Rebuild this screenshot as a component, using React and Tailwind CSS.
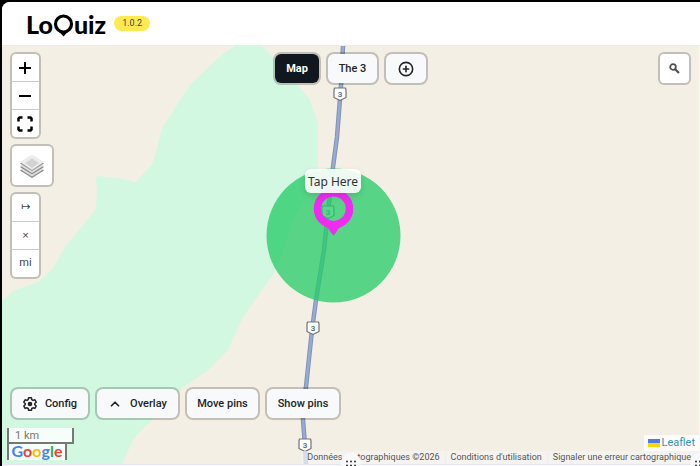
import React from "react";
import { ChevronUp, CirclePlus } from "lucide-react";

const barButton =
  "flex h-[33px] items-center justify-center rounded-lg border-2 border-black/20 bg-clip-padding pt-px text-[11px]";
const lightButton = barButton + " bg-[#f8f9fb] font-medium text-[#212529]";
const group =
  "flex w-[31px] flex-col divide-y divide-[#ccc] overflow-hidden rounded-md border-2 border-black/20 bg-white bg-clip-padding";
const groupButton =
  "flex h-7 items-center justify-center last:h-[27px] text-[#444]";

const road =
  "M343 46 341 86 337 137 333 167 328 212 324 250 316 300 312 330 306 387 303 403 303 420 305 445 306 465";

const shields = [
  [340, 94],
  [328, 212],
  [313, 328],
  [305, 445],
];

const Logo = () => (
  <a href="#" aria-label="LoQuiz" className="flex items-center font-['Lato',sans-serif] text-[25px] leading-7 font-black text-black">
    <span>Lo</span>
    <svg width="21" height="24" viewBox="0 0 21 24" className="mt-1" aria-hidden="true">
      <circle cx="10.500" cy="10" r="8" fill="none" stroke="currentColor" strokeWidth="3.200" />
      <path d="M6 17.500h9L10.500 22.500z" fill="currentColor" />
    </svg>
    <span>uiz</span>
  </a>
);

const MapDrawing = () => (
  <svg
    className="absolute inset-0 h-full w-full"
    viewBox="2 46 697 418"
    preserveAspectRatio="xMidYMid slice"
  >
    <path
      fill="#d2f8e1"
      d="M235 46 218 58 190 85 162 128 153 163 136 182 118 178 99 176Q95 177 96 181L97 190 96 209 65 247 53 268Q42 280 36 283L13 291 2 301V466H121L134 438 153 419 182 388 207 371 228 350 243 317 274 273 283 253 290 227 302 203 318 173V123L310 100 298 85 272 56 262 46Z"
    />
    <g fill="none" strokeLinejoin="round">
      <path stroke="#7f93ba" strokeWidth="4.500" d={road} />
      <path stroke="#98abcf" strokeWidth="2.500" d={road} />
    </g>
    {shields.map(([x, y]) => (
      <g key={y} transform={`translate(${x} ${y})`}>
        <path
          d="M-5.500-6H5.500L6-4V3.500L0 6.500-6 3.500V-4Z"
          fill="#fff"
          stroke="#707478"
          strokeWidth="1.200"
          strokeLinejoin="round"
        />
        <text y="3" textAnchor="middle" className="fill-[#5f6f8a] text-[8px] font-bold">
          3
        </text>
      </g>
    ))}
    <circle cx="333.500" cy="235.500" r="67" fill="#27cb6a" fillOpacity="0.77" />
    <circle cx="333.500" cy="208.700" r="16" fill="none" stroke="#ee2bee" strokeWidth="7.500" />
    <path d="M325 226Q329 228 330.500 232L333.500 235.500 336.500 232Q338 228 342 226Z" fill="#ee2bee" />
    <rect
      x="305"
      y="169"
      width="56"
      height="24"
      rx="6"
      fill="#fff"
      fillOpacity="0.9"
      className="drop-shadow-md"
    />
    <text
      x="333"
      y="186"
      textAnchor="middle"
      className="fill-[#333] font-['Noto_Sans',sans-serif] text-[12px]"
    >
      Tap Here
    </text>
  </svg>
);

const Layers = () => (
  <svg width="26" height="26" viewBox="0 0 26 26" aria-hidden="true">
    <path d="M1 17.500 13 10l12 7.500L13 25z" fill="#8c8c8c" />
    <path d="M1 16 13 9l12 7-12 7.500z" fill="#e2e2e2" />
    <path d="M1 14 13 7l12 7-12 7.500z" fill="#8c8c8c" />
    <path d="M1 12.500 13 6l12 6.500L13 20z" fill="#e2e2e2" />
    <path d="M1 10.500 13 3l12 7.500-12 7.500z" fill="#939393" />
    <path d="M1 9 13 1.500 25 9l-12 8z" fill="#ededed" />
    <path d="M6 10 13 5.500 20 10l-7 5z" fill="#d2d2d2" />
  </svg>
);

const Gear = () => (
  <svg width="14" height="14" viewBox="0 0 14 14" aria-hidden="true">
    <path
      d="M5.600.8h2.800l.4 1.900 1.200.7 1.900-.6 1.300 2.400-1.400 1.300v1.200l1.400 1.300-1.300 2.400-1.900-.6-1.200.7-.4 1.800H5.600l-.4-1.800-1.200-.7-1.900.6L.8 9l1.400-1.300V6.500L.8 5.200l1.300-2.400 1.900.6 1.200-.7z"
      fill="none"
      stroke="currentColor"
      strokeWidth="1.500"
      strokeLinejoin="round"
    />
    <circle cx="7" cy="7" r="2.300" fill="currentColor" />
  </svg>
);

const Grip = () => (
  <svg width="10" height="7" viewBox="0 0 10 7" fill="#333" aria-hidden="true">
    {[1, 5, 9].map((x) => (
      <g key={x}>
        <circle cx={x} cy="1.500" r="1" />
        <circle cx={x} cy="5.500" r="1" />
      </g>
    ))}
  </svg>
);

const ZoomControls = () => (
  <div className={group}>
    <button aria-label="Zoom in" className={groupButton}>
      <svg width="13" height="12" viewBox="0 0 13 12" stroke="#000" strokeWidth="2">
        <path d="M6 0v12M0 6h12" />
      </svg>
    </button>
    <button aria-label="Zoom out" className={groupButton}>
      <svg width="13" height="12" viewBox="0 0 13 12" stroke="#000" strokeWidth="2">
        <path d="M0 6h12" />
      </svg>
    </button>
    <button aria-label="Full screen" className={groupButton}>
      <svg width="17" height="16" viewBox="0 0 17 16" fill="none" stroke="#000" strokeWidth="2.500">
        <path d="M1.500 5.500v-3l1-1h3M10.500 1.500h3l1 1v3M14.500 10.500v3l-1 1h-3M5.500 14.500h-3l-1-1v-3" />
      </svg>
    </button>
  </div>
);

const MeasureControls = () => (
  <div className={group}>
    <button className={groupButton + " font-['DejaVu_Sans',sans-serif] text-[11px]"}>↦</button>
    <button className={groupButton + " font-['DejaVu_Sans',sans-serif] text-[9px]"}>×</button>
    <button className={groupButton + " text-[11px]"}>mi</button>
  </div>
);

const App = () => {
  return (
    <div className="h-screen overflow-hidden bg-black pt-0.5 pl-0.5 font-['Roboto',sans-serif]">
      <div className="flex h-full flex-col overflow-hidden rounded-tl-lg bg-[#f8f9fb]">
        <header className="flex h-11 shrink-0 items-center gap-2 border-b border-[#e9ebef] bg-white pl-6">
          <Logo />
          <span className="rounded-full bg-[#fde952] px-2 text-[9px] leading-[15px] text-[#444]">
            1.0.2
          </span>
        </header>

        <main className="relative mr-px flex min-h-0 flex-1 flex-col justify-between bg-[#f4efe4]">
          <MapDrawing />

          <div className="relative grid grid-cols-[1fr_auto_1fr] items-start px-2 pt-1.5">
            <div className="flex flex-col gap-[5px]">
              <ZoomControls />
              <button
                aria-label="Layers"
                className="flex h-[43px] w-11 items-center justify-center rounded-md border-2 border-black/20 bg-white bg-clip-padding"
              >
                <Layers />
              </button>
              <MeasureControls />
            </div>
            <nav className="flex gap-[5px]">
              <button className={barButton + " w-12 bg-[#10171e] font-bold text-white"}>Map</button>
              <button className={lightButton + " w-[53px]"}>The 3</button>
              <button aria-label="Add" className={lightButton + " w-11"}>
                <CirclePlus size={16} strokeWidth={2.4} />
              </button>
            </nav>
            <button
              aria-label="Search"
              className="flex size-[33px] items-center justify-center justify-self-end rounded-md border-2 border-black/20 bg-white bg-clip-padding"
            >
              <svg width="11" height="11" viewBox="0 0 11 11" fill="none" stroke="#505050">
                <circle cx="4" cy="4" r="2.800" strokeWidth="1.800" />
                <path d="M6.200 6.200 10 10" strokeWidth="2.200" />
              </svg>
            </button>
          </div>

          <div className="relative">
            <div className="flex gap-[5px] px-2">
              <button className={lightButton + " w-20 gap-2"}>
                <Gear />
                Config
              </button>
              <button className={lightButton + " w-[85px] gap-2"}>
                <ChevronUp size={14} strokeWidth={3} />
                Overlay
              </button>
              <button className={lightButton + " w-[75px]"}>Move pins</button>
              <button className={lightButton + " w-[76px]"}>Show pins</button>
            </div>
            <div className="flex items-end justify-between pt-2">
              <div className="mb-1 pl-[5px] text-[11px] text-[#777]">
                <div className="h-4 w-[67px] border-x-2 border-b-2 border-[#777] bg-white/80 pl-1.5 leading-4">
                  1 km
                </div>
                <div className="h-4 w-[60px] border-x-2 border-[#777] bg-white/80 text-center font-['Lato',sans-serif] text-[16px] leading-[14px] font-bold">
                  <span className="text-[#4285f4]">G</span>
                  <span className="text-[#ea4335]">o</span>
                  <span className="text-[#fbbc05]">o</span>
                  <span className="text-[#4285f4]">g</span>
                  <span className="text-[#34a853]">l</span>
                  <span className="text-[#ea4335]">e</span>
                </div>
              </div>
              <div className="flex flex-col items-end">
                <a
                  href="#"
                  className="flex items-center gap-0.5 bg-white/80 px-1 text-[11px] leading-4 text-[#3293b8]"
                >
                  <svg width="12" height="8" viewBox="0 0 12 8" aria-hidden="true">
                    <path fill="#4c7be1" d="M0 0h12v4H0z" />
                    <path fill="#ffd500" d="M0 4h12v4H0z" />
                  </svg>
                  Leaflet
                </a>
                <div className="flex gap-px text-[9px] leading-[13px] whitespace-nowrap text-[#555]">
                  <span className="bg-[#f5f5f5]/70 px-[5px]">Données cartographiques ©2026</span>
                  <a href="#" className="bg-[#f5f5f5]/70 px-[5px]">Conditions d'utilisation</a>
                  <a href="#" className="bg-[#f5f5f5]/70 pr-2 pl-[5px]">Signaler une erreur cartographique</a>
                </div>
              </div>
            </div>
          </div>
        </main>

        <footer className="relative h-0.5 shrink-0 border-t border-[#e3e7ef]">
          <button
            aria-label="Resize panel"
            className="absolute -top-3 left-1/2 flex size-5 -translate-x-1/2 items-center justify-center rounded-full bg-[#f8f9fb]"
          >
            <Grip />
          </button>
          <button
            aria-label="Resize side panel"
            className="absolute -top-3 -right-2.5 flex size-5 items-center justify-center rounded-full bg-[#f8f9fb]"
          >
            <Grip />
          </button>
        </footer>
      </div>
    </div>
  );
};

export default App;
